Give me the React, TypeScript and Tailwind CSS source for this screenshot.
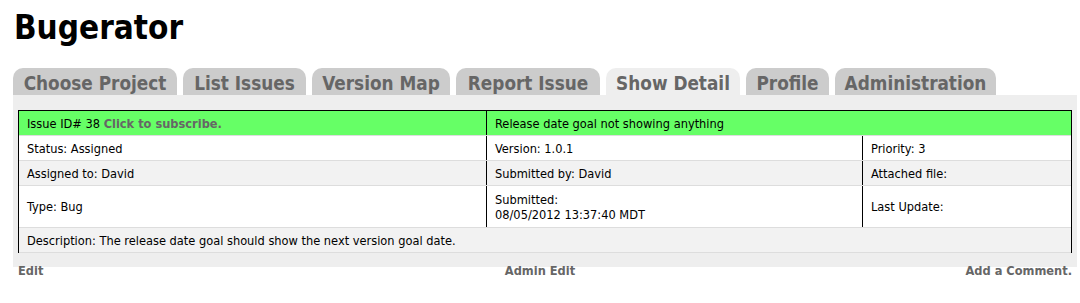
import React from "react";

const tabs = [
  { label: "Choose Project", w: "w-[164px]" },
  { label: "List Issues", w: "w-[123px]" },
  { label: "Version Map", w: "w-[138px]" },
  { label: "Report Issue", w: "w-[144px]" },
  { label: "Show Detail", w: "w-[134px]", active: true },
  { label: "Profile", w: "w-[83px]" },
  { label: "Administration", w: "w-[161px]" },
];

const font = { fontFamily: '"DejaVu Sans Condensed", "DejaVu Sans", sans-serif' };

export default function App() {
  return (
    <div className="w-[1080px] h-[303px] bg-white pl-[13px] pr-[3px] pt-[9px]" style={font}>
      {/* Title */}
      <h1 className="text-[33px] leading-[38px] font-bold text-black pl-[1px]">Bugerator</h1>

      {/* Tabs */}
      <div className="flex gap-[6px] mt-[21px] h-[27px]">
        {tabs.map((t) => (
          <div
            key={t.label}
            className={`${t.w} h-[27px] pt-[4px] rounded-t-[10px] text-center text-[18.8px] leading-[23px] font-bold text-[#666] ${
              t.active ? "bg-[#eeeeee]" : "bg-[#cccccc]"
            }`}
          >
            {t.label}
          </div>
        ))}
      </div>

      {/* Panel */}
      <div className="bg-[#eeeeee] px-[5px] pt-[15px] pb-[14px]">
        <div className="border-x border-t border-black text-[12.7px] leading-[15px] text-black">
          {/* Header row */}
          <div className="grid grid-cols-[468px_1fr] h-[25px] bg-[#66ff66] border-b border-[#dddddd]">
            <div className="px-[8px] flex items-center border-r border-black">
              Issue ID# 38&nbsp;<span className="font-bold text-[#666]">Click to subscribe.</span>
            </div>
            <div className="px-[8px] flex items-center">Release date goal not showing anything</div>
          </div>

          <div className="grid grid-cols-[468px_376px_1fr] h-[25px] bg-white border-b border-[#dddddd]">
            <div className="px-[8px] flex items-center border-r border-black">Status: Assigned</div>
            <div className="px-[8px] flex items-center border-r border-black">Version: 1.0.1</div>
            <div className="px-[8px] flex items-center">Priority: 3</div>
          </div>

          <div className="grid grid-cols-[468px_376px_1fr] h-[25px] bg-[#f2f2f2] border-b border-[#dddddd]">
            <div className="px-[8px] flex items-center border-r border-black">Assigned to: David</div>
            <div className="px-[8px] flex items-center border-r border-black">Submitted by: David</div>
            <div className="px-[8px] flex items-center">Attached file:</div>
          </div>

          <div className="grid grid-cols-[468px_376px_1fr] h-[42px] bg-white border-b border-[#dddddd]">
            <div className="px-[8px] flex items-center border-r border-black">Type: Bug</div>
            <div className="px-[8px] flex items-center border-r border-black">
              <div>
                Submitted:
                <br />
                08/05/2012 13:37:40 MDT
              </div>
            </div>
            <div className="px-[8px] flex items-center">Last Update:</div>
          </div>

          <div className="h-[25px] flex items-center bg-[#f2f2f2] border-b border-[#dddddd] px-[8px]">
            Description: The release date goal should show the next version goal date.
          </div>
        </div>
      </div>

      {/* Links */}
      <div className="grid grid-cols-3 px-[5px] -mt-[4px] text-[12.7px] leading-[15px] font-bold text-[#666]">
        <span>Edit</span>
        <span className="text-center pr-[10px]">Admin Edit</span>
        <span className="text-right">Add a Comment.</span>
      </div>
    </div>
  );
}
